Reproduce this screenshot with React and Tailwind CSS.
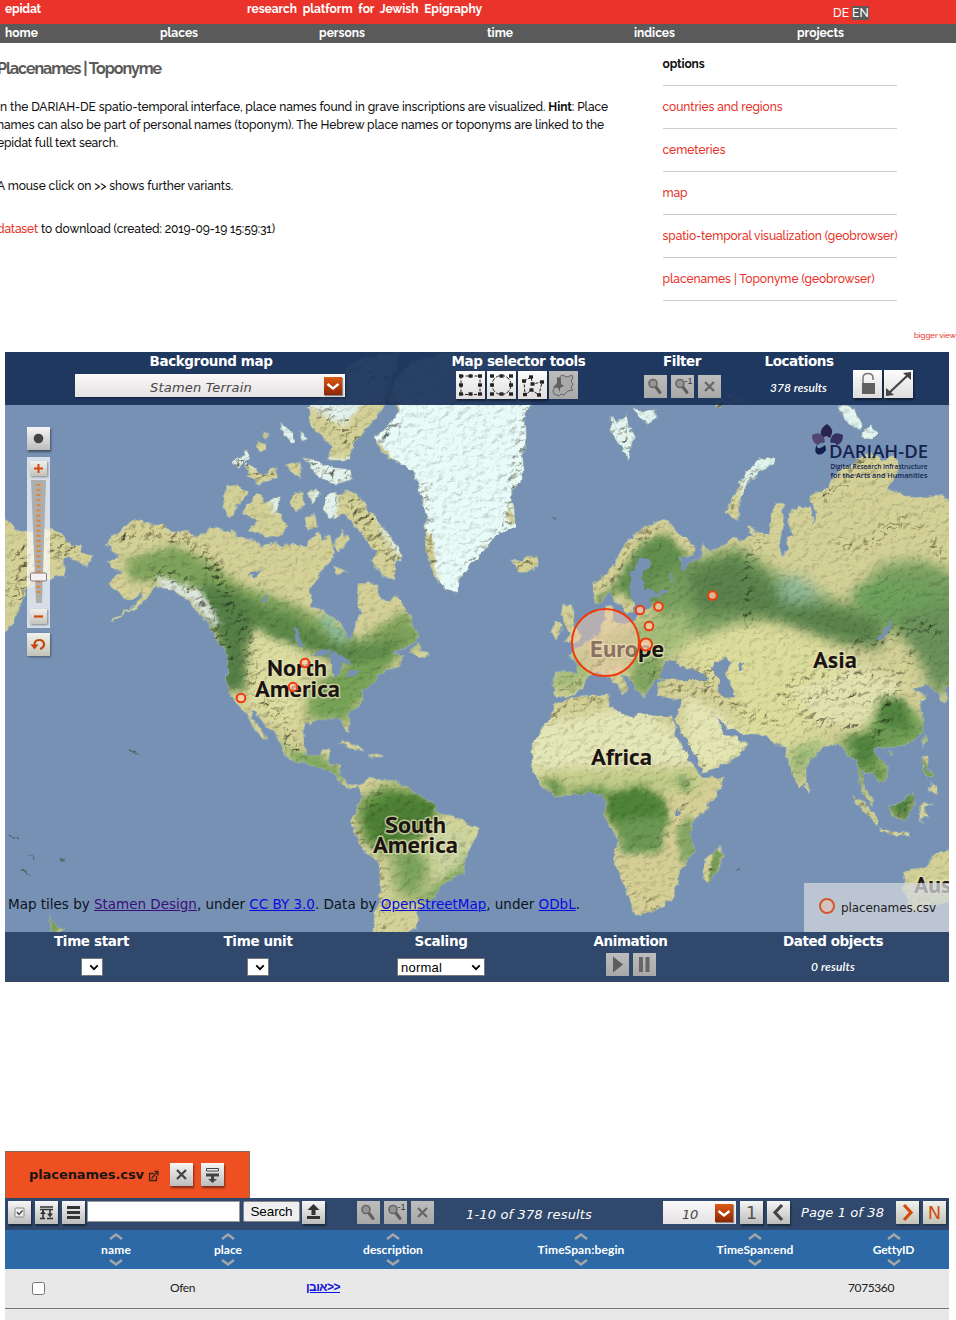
import React, { useLayoutEffect, useRef, useState } from "react";

/* Text that spreads its letters so that the run takes exactly `w` pixels. */
function Fit({ w, className = "", children, ...rest }) {
  const ref = useRef(null);
  const [ls, setLs] = useState(0);
  useLayoutEffect(() => {
    const el = ref.current;
    setLs((w - el.getBoundingClientRect().width) / el.textContent.length);
  }, [w]);
  return (
    <span ref={ref} className={"inline-block whitespace-nowrap " + className} style={{ letterSpacing: ls + "px" }} {...rest}>
      {children}
    </span>
  );
}

const verdana = "font-['Verdana','DejaVu_Sans',sans-serif] font-normal";
const calibri = "font-['Lato',sans-serif]";
const light = "bg-linear-to-b from-[#f6f6f6] to-[#bdbdbd] shadow-[1px_2px_2px_rgba(0,0,0,0.45)]";
const pale = "bg-linear-to-b from-[#fdfdfd] to-[#dedcdc] shadow-[1px_2px_2px_rgba(0,0,0,0.45)]";
const warm = "bg-linear-to-b from-[#f1f1ec] to-[#c3c3b9] shadow-[1px_1px_2px_rgba(0,0,0,0.4)]";
const off = "bg-linear-to-b from-[#bdbdbd] to-[#a8a8a8]";

function Btn({ tone = light, size = "size-[23px]", children, className = "" }) {
  return <button className={`flex shrink-0 items-center justify-center ${size} ${tone} ${className}`}>{children}</button>;
}

const Magnifier = ({ inverse }) => (
  <svg viewBox="0 0 23 23" className="size-[23px]">
    <path d="M11.500 11.500 16 17.500" stroke="#5f5f5f" strokeWidth="3" strokeLinecap="round" />
    <circle cx="9" cy="8.500" r="4" fill="#959595" stroke="#666" strokeWidth="1.600" />
    {inverse && <text x="13.500" y="9" fontSize="9" fill="#333" fontFamily="Liberation Sans, sans-serif">-1</text>}
  </svg>
);
const Cross = ({ c = "#666" }) => (
  <svg viewBox="0 0 23 23" className="size-[23px]"><path d="M7 7l9 9M16 7l-9 9" stroke={c} strokeWidth="2.300" /></svg>
);
const Chevron = () => (
  <span className="flex size-[18px] shrink-0 items-center justify-center bg-linear-to-b from-[#de5a12] to-[#8c2505] shadow-[1px_1px_1px_rgba(0,0,0,0.4)]">
    <svg viewBox="0 0 18 18" className="size-[18px]"><path d="M3.500 7 9 11.500l5.500-4.500" fill="none" stroke="#fff" strokeWidth="2.300" /></svg>
  </span>
);
const Arrow = () => <svg viewBox="0 0 12 8" className="h-[7px] w-[10px]"><path d="M1.500 1.500 6 6l4.500-4.500" fill="none" stroke="#000" strokeWidth="2.200" /></svg>;

function Handles({ pts }) {
  return pts.map(([x, y], i) => <rect key={i} x={x - 2} y={y - 1.7} width="4" height="3.400" fill="#222" />);
}

/* ---------- terrain ---------- */
const LAND = [
  // North and Central America
  "M107 562L119 557 107 545 112 536 120 532 133 518 147 523 160 525 175 533 187 530 195 537 205 532 217 525 224 532 233 531 240 538 253 539 262 547 275 543 283 546 296 544 305 548 312 540 317 530 322 540 330 535 334 548 332 560 322 570 314 582 309 590 311 606 323 612 336 620 343 626 347 638 353 638 356 622 362 613 357 600 358 584 366 582 377 585 380 597 387 602 398 596 403 607 410 615 414 628 420 637 412 645 400 649 391 655 404 655 400 665 393 668 384 672 377 677 371 684 362 690 362 703 348 713 350 732 346 731 340 718 320 720 305 723 302 740 307 755 320 757 322 750 330 748 328 762 340 765 341 778 348 784 358 786 354 790 343 785 333 773 320 768 305 763 295 761 283 753 280 743 273 731 263 722 254 710 249 711 257 724 267 739 264 740 255 730 247 713 238 705 227 690 227 670 229 655 221 646 213 634 209 623 200 615 190 602 173 590 157 585 150 592 143 604 128 612 112 622 114 619 131 608 141 598 144 590 132 600 123 598 118 590 110 585 112 578 123 572 113 568z",
  // Eastern Siberia at the left edge
  "M-5 512L5 518 15 530 23 532 33 533 50 528 63 535 70 545 80 546 82 553 93 556 88 566 80 563 72 558 63 558 65 575 47 578 27 590 20 605 12 625 5 632 -5 640z",
  // Arctic archipelago
  "M227 487L235 485 248 492 240 503 230 517 223 508z", "M247 505L257 495 267 502 275 500 277 512 288 527 280 535 270 537 248 530 257 522 243 512z",
  "M337 495L350 490 360 498 366 508 377 518 384 530 400 548 402 562 394 558 396 579 386 578 370 562 377 552 370 545 362 533 353 525 344 514 333 518z",
  "M307 408L320 398 340 375 358 360 400 352 384 405 380 412 367 428 353 445 350 460 327 460 333 447 322 436 313 428z",
  "M305 457L318 462 330 467 350 470 352 480 335 484 318 478z", "M280 424L288 428 295 440 290 443 284 435zM300 432L308 440 303 443zM262 433l6 2-3 3zM258 443l8 1 0 5-8 2z",
  "M232 464L247 451 249 457 238 468zM246 463L257 470 263 475 276 467 278 477 260 484 248 476z", "M285 466L300 462 301 478 292 472z",
  "M292 495L302 491 303 504 297 512 291 505z", "M274 497L279 497 278 511 273 505z", "M308 493L315 489 321 494 312 503z", "M328 495L336 492 334 512 329 518 324 508z", "M305 518L314 513 317 525 308 530z", "M334 546L342 530 348 541 340 552z", "M334 566L346 571 337 574z",
  // Greenland
  "M373 438L390 425 400 410 388 400 396 380 412 362 450 352 545 352 538 380 530 405 524 422 526 440 522 455 524 470 520 482 510 495 514 508 515 525 503 533 490 542 480 555 470 566 460 578 457 592 448 590 440 585 433 570 428 555 425 532 428 517 423 502 420 488 413 472 400 462 385 455z",
  "M513 560L522 562 530 556 537 557 539 566 530 570 525 573 518 570z",
  // Svalbard, Novaya Zemlya, Severnaya Zemlya
  "M610 418L618 422 627 415 628 428 634 436 627 458 621 445 613 435zM633 408L645 412 655 410 654 418 647 423 639 416z",
  "M773 457L762 459 750 468 740 482 735 495 727 512 732 518 739 520 738 506 742 494 750 480 763 469 773 464z",
  "M838 408L851 405 862 424 860 430 850 424zM862 437l8-12 8 9-8 5z",
  // British Isles
  "M563 605L570 606 573 614 572 622 580 635 579 640 565 642 570 634 565 625 561 614z", "M551 632L555 622 561 623 561 632 556 638z",
  // Eurasia
  "M595 602L593 584 605 574 613 568 622 549 632 537 647 525 663 520 672 524 677 533 687 538 695 548 693 555 677 557 683 568 692 562 700 561 703 545 708 551 720 547 733 538 744 540 753 535 748 527 758 533 770 536 773 508 778 502 784 503 783 522 779 547 783 555 789 549 787 538 793 535 789 520 791 509 797 510 798 506 810 508 813 525 817 512 810 502 810 495 827 488 837 472 857 462 870 452 882 461 893 457 900 468 890 482 887 490 900 493 905 497 927 498 933 495 945 496 949 503 960 503 960 683 949 683 945 690 948 700 943 704 936 690 926 685 913 690 926 695 919 707 924 720 923 733 909 743 893 747 876 748 873 753 889 767 888 777 878 783 873 773 863 770 864 787 873 800 872 806 861 790 859 773 856 760 846 753 838 743 823 747 806 765 806 783 799 787 788 763 786 747 776 745 766 735 743 733 729 728 716 717 724 735 736 737 748 745 739 757 720 766 703 773 695 755 683 737 676 723 681 700 670 698 658 695 658 683 668 678 655 680 650 688 643 698 636 687 626 677 620 674 629 688 623 694 616 683 606 676 599 671 586 677 584 686 576 693 566 697 556 695 553 688 555 673 566 671 577 673 577 663 569 655 578 648 590 641 600 632 605 620 607 606 612 607 612 618 620 624 633 622 640 613 627 613 622 605 614 600 609 592 602 603z",
  // Africa and Madagascar
  "M556 703L573 698 590 696 609 695 609 707 621 713 633 718 639 712 656 717 673 717 676 737 689 760 703 778 724 778 716 797 705 810 693 820 691 835 694 853 679 870 678 883 672 897 663 907 650 912 636 915 631 903 622 880 613 860 618 840 606 817 604 797 589 792 572 795 556 797 543 787 533 773 531 750 540 732 549 720z",
  "M721 847L723 857 716 872 709 883 703 878 706 860z",
  // South America
  "M358 787L370 777 377 779 387 780 407 787 417 795 433 803 437 813 457 817 478 830 475 842 467 853 463 873 450 879 440 887 435 897 427 903 417 915 417 927 403 935 372 935 377 910 380 893 380 863 363 850 356 836 350 823 357 810 362 797z",
  // Islands of the Indian Ocean, Pacific and Australia
  "M851 795L866 803 872 812 879 820 879 827 866 813zM889 807L902 802 913 792 914 803 906 820 891 815zM880 829L895 832 910 834 910 836 893 835 880 831zM920 805L932 803 925 808 929 818 924 815 922 823 919 814zM923 757l4 1 0 10 6 6-2 3-9-10zM931 783l6 3 0 8-7-3zM924 736l2 2-3 8-1-4zM806 781l4 5-1 6-4-4zM889 751l4 2-3 3z",
  "M960 848L949 850 936 853 926 867 912 869 904 874 903 887 908 897 910 912 920 910 935 904 949 903 960 903zM50 917l6 9 8 2-6 6-8-3z",
  "M338 745L348 742 360 748 366 752 360 751 348 745zM368 756l8-2 8 2-7 2zM410 653l8-10 4 7 7 5-4 2-8-2z",
  "M715 400l15 3-12 4zM728 395l14 6-10 3z",
];

const LAKES = [
  "M659 678L664 663 671 660 676 660 681 667 693 668 709 679 698 682 689 679 676 680z",
  "M711 668L714 662 728 658 731 665 725 670 729 680 734 697 725 698 718 692 720 682z",
  "M629 590L631 572 640 558 650 560 650 566 643 574 644 588 656 592 668 590 669 593 650 597 652 605 640 615 632 616 634 603z",
  "M329 655L335 652 345 657 352 662 350 666 342 662 340 672 335 678 332 668z", "M350 671L361 671 355 676 345 677zM313 655l10-6 9 3-8 4z",
  "M674 812l3-4 4 3-2 6-4-1z", "M741 661l3 2-1 8-4 1zM877 638l14-17 2 0-9 16-6 4z", "M680 562l7 5-2 4-5-3zM670 575l3 0 1 8-3-2zM293 628l4 0 5 18-3 1zM251 575l12-6-8 9z",
  "M676 723l4 5 18 35 6 9-3 1-13-16z", "M247 575l9-4-2 6zM262 600l6-5-2 6z",
];

/* Each patch: fill, outline, softness */
const drylands = [
  ["#dbdca0", "M250 625L300 645 305 700 290 730 250 705 240 670z", 5],
  ["#e4e7b8", "M535 725L640 705 690 745 700 765 600 768 525 770z", 6],
  ["#e4e6b5", "M685 695L725 715 755 745 705 775 685 740z", 5],
  ["#dcdd9d", "M660 640L760 620 830 640 850 690 800 740 740 740 735 690 700 670z", 8],
  ["#e2e2b0", "M790 690L860 665 905 685 870 725 820 725z", 6],
  ["#d5cf96", "M560 800L700 790 730 770 700 810 680 800 690 870 665 915 635 922 615 860 690 850 660 850z", 5],
  ["#d0d69c", "M425 820L485 825 465 870 430 880 415 845z", 6],
  ["#d3d399", "M385 860L397 870 400 935 372 935z", 3],
  ["#dadb9e", "M770 735L830 735 805 765z", 5],
];
const greens = [
  ["#7fa35c", "M125 560L175 545 215 565 240 585 280 598 330 622 360 640 405 610 425 640 380 670 330 655 290 640 245 620 232 650 235 690 225 690 220 640 200 605 165 582 130 580z", 5],
  ["#557e47", "M200 582L235 592 262 610 248 645 245 690 222 690 224 645 208 620z", 5],
  ["#5c8849", "M230 598L290 616 330 640 370 648 405 635 375 675 320 654 270 636z", 5],
  ["#76a257", "M310 690L345 665 390 655 380 680 355 708 348 722 308 720z", 6],
  ["#7fa85f", "M262 722L290 750 320 755 342 770 350 785 330 775 295 762z", 4],
  ["#588a3c", "M358 800L390 785 430 797 440 815 410 840 385 855 362 840z", 6],
  ["#4d7f35", "M362 815L400 795 434 803 430 832 388 852z", 3],
  ["#78a25a", "M392 850L415 835 430 870 418 900 398 895 394 870z", 8],
  ["#8cae69", "M415 900L440 880 468 850 470 875 430 905z", 4],
  ["#628f4e", "M595 600L610 590 640 545 665 532 695 565 675 600 655 605 630 600 620 590 600 605z", 4],
  ["#789f5f", "M650 585L690 560 740 548 800 590 850 605 880 565 920 560 960 575 960 675 890 628 850 642 800 622 750 618 700 635 660 628z", 7],
  ["#5b824c", "M685 572L735 555 770 582 830 608 885 622 880 650 820 635 770 615 700 612z", 7],
  ["#6ea15c", "M850 590L890 580 949 590 949 620 880 622z", 6],
  ["#a5bd7a", "M575 650L600 640 640 620 690 610 690 640 655 670 600 660 580 690 550 690 550 675z", 7],
  ["#82a562", "M635 660L660 655 665 675 645 698 628 685z", 5],
  ["#bccb86", "M540 775L700 770 700 790 560 790z", 7],
  ["#4f8438", "M606 793L640 785 665 798 668 825 655 835 622 835 604 812z", 4],
  ["#6b9854", "M618 820L665 815 662 852 622 854z", 4],
  ["#6c9850", "M541 778L558 780 568 793 555 800zM570 790l35-5 5 14-38 1z", 4],
  ["#86a766", "M676 778L688 776 690 792 680 790zM675 830L692 815 697 853 682 865z", 3],
  ["#6f9d54", "M835 740L865 735 880 705 890 698 920 715 930 735 900 752 880 755 895 775 878 788 865 772 862 790 878 808 858 792 853 762z", 6],
  ["#528440", "M850 735L880 735 870 765 858 765zM885 807L916 788 908 824zM850 793L882 830 866 813zM880 700L905 700 910 730 880 725z", 4],
  ["#93b573", "M790 750L825 740 820 752 805 765 803 785 795 775z", 6],
  ["#6b915a", "M895 615L960 600 960 675 935 700 922 665z", 7],
  ["#78a05a", "M715 847l8 5-10 30-5 0zM920 755l14 20-2 4-8-8zM50 915l14 12-14 6z", 1],
  ["#c8d3a0", "M430 830L470 835 460 868 437 875z", 6],
];
const frost = [
  ["#8cbc9f", "M325 612L350 640 340 645 318 620z", 5],
  ["#91ba99", "M775 580L800 575 825 600 785 605z", 8],
  ["#e3f2ee", "M307 405L340 352 400 352 382 400 360 405 345 425 332 420zM303 458h56v28h-56zM270 420h40v28h-40zM230 450h25v18h-25zM272 492h10v20h-10zM323 485h14v40h-14zM310 490h10v12h-10z", 3],
  ["#e1f4f0", "M375 510L408 545 402 562 385 535zM605 400h60v65h-60zM740 455h40v45h-40zM835 400h50v45h-50z", 4],
  ["#dde6dd", "M158 575L200 590 222 625 212 625 190 600 160 588z", 3],
];
const ranges = [
  ["M120 540q30-15 60 0t40 35M150 575q40-5 65 45l15 45M225 600q25 30 25 60t30 60q15 35 20 35M195 545q35 40 35 60", 12],
  ["M10 560q40-20 70-10M12 600l20-40", 18],
  ["M320 410q40 20 35 50M340 360l50 20M350 500l50 65M235 460l40 20M300 462l50 15", 16],
  ["M380 440l20-20M423 480l6 90M520 380l5 40-8 45-10 60-45 50", 9],
  ["M600 590l15-20 40-45M515 562h20M615 420l15 30M735 510l20-40", 9],
  ["M358 800q-10 30 12 52 16 10 13 80M388 785l-20 25", 6],
  ["M765 540l-14 12q-4 20-3 75M552 720q20-20 50-22M560 690q10-5 20-12M590 665q15-5 20 0M650 660l10 25M665 690q40-5 55 5 25 20 60 30", 7],
  ["M715 675l-25-12 35 35M780 700q20-30 60-25 30 5 50-5M785 690q15 38 75 36M800 700q40-15 80 5", 9],
  ["M835 540q30 20 50-10t60 30M820 500l50-40M880 640q30-20 60-10M850 650l50-20M900 680l-25 60M915 650l-30 50", 9],
  ["M690 745q10 20 20 30M690 780l-8 40-25 25M706 860l10 15M620 870q15 35 40 35", 4],
  ["M856 797l22 26M885 832l25 4M895 815l15-15M925 757l10 35", 4],
  ["M625 365h40M715 400h30", 20],
];

function Terrain() {
  return (
    <svg viewBox="5 352 944 580" className="absolute inset-0 h-[580px] w-[944px]" preserveAspectRatio="none">
      <defs>
        <filter id="coast" x="0" y="0" width="100%" height="100%" filterUnits="objectBoundingBox" colorInterpolationFilters="sRGB">
          <feTurbulence type="fractalNoise" baseFrequency="0.13" numOctaves="2" seed="4" result="n" />
          <feDisplacementMap in="SourceGraphic" in2="n" scale="7" xChannelSelector="R" yChannelSelector="G" />
        </filter>
        <filter id="relief" x="0" y="0" width="100%" height="100%" colorInterpolationFilters="sRGB">
          <feTurbulence type="fractalNoise" baseFrequency="0.15 0.19" numOctaves="3" seed="11" />
          <feColorMatrix values="0 0 0 0 0 0 0 0 0 0 0 0 0 0 0 1 0 0 0 0" />
          <feDiffuseLighting surfaceScale="2.400" diffuseConstant="1.360" lightingColor="#fffdf4">
            <feDistantLight azimuth="225" elevation="50" />
          </feDiffuseLighting>
        </filter>
        <filter id="soft" x="-5%" y="-5%" width="110%" height="110%"><feGaussianBlur stdDeviation="3" /></filter>
        {[1, 3, 4, 5, 6, 7, 8].map((b) => (
          <filter key={b} id={"b" + b} x="-30%" y="-30%" width="160%" height="160%" colorInterpolationFilters="sRGB"><feGaussianBlur stdDeviation={b * 0.9} /></filter>
        ))}
        <clipPath id="land"><path d={LAND.join("")} /></clipPath>
        <mask id="mountains" maskUnits="userSpaceOnUse" x="-5" y="342" width="964" height="600">
          <rect x="-5" y="342" width="964" height="600" fill="#3a3a3a" />
          <g filter="url(#soft)" fill="none" stroke="#f4f4f4">
            {ranges.map(([d, w], i) => <path key={i} d={d} strokeWidth={w} />)}
          </g>
        </mask>
      </defs>
      <rect x="0" y="340" width="960" height="600" fill="#7691b3" />
      <g filter="url(#coast)">
        <rect x="-5" y="342" width="964" height="600" fill="#7691b3" />
        <path d={LAND.join("")} fill="none" stroke="#93a9b0" strokeWidth="1.500" />
        <g clipPath="url(#land)">
          <path d={LAND.join("")} fill="#d4d198" />
          {drylands.map(([c, d, b], i) => <path key={i} d={d} fill={c} filter={`url(#b${b})`} />)}
          {greens.map(([c, d, b], i) => <path key={i} d={d} fill={c} filter={`url(#b${b})`} />)}
          {frost.map(([c, d, b], i) => <path key={i} d={d} fill={c} filter={`url(#b${b})`} />)}
          <path d="M373 438L400 410 390 380 440 345 552 345 530 422 526 482 512 500 516 525 475 562 457 594 440 586 428 540 423 500 405 470z" fill="#e8fbf9" />
          <path d="M424 535l8 0 4 45-8-20zM508 500l8 22-8 2z" fill="#d1cb95" filter="url(#b1)" />
          <g mask="url(#mountains)" className="mix-blend-multiply"><rect x="-5" y="342" width="964" height="600" filter="url(#relief)" /></g>
        </g>
        {LAKES.map((d, i) => <path key={i} d={d} fill="#7691b3" />)}
        <path d="M131 750l5 2 2 3-3-1zM10 835l8 5M29 855l5 7M22 869l8 6M60 861l5-2M736 870l4-1M554 518h2" fill="none" stroke="#4d6560" strokeWidth="1.100" />
      </g>
      <g fontFamily="'PT Sans','Open Sans',sans-serif" fontWeight="700" fontSize="24" fill="#1c1410" stroke="#e6e5bd" strokeOpacity="0.700" strokeWidth="3" paintOrder="stroke" strokeLinejoin="round">
        <text x="267" y="676" textLength="60" lengthAdjust="spacingAndGlyphs">North</text>
        <text x="255" y="697" textLength="85" lengthAdjust="spacingAndGlyphs">America</text>
        <text x="385" y="833" textLength="61" lengthAdjust="spacingAndGlyphs">South</text>
        <text x="373" y="853" textLength="85" lengthAdjust="spacingAndGlyphs">America</text>
        <text x="591" y="765" textLength="61" lengthAdjust="spacingAndGlyphs">Africa</text>
        <text x="813" y="668" textLength="44" lengthAdjust="spacingAndGlyphs">Asia</text>
        <text x="590" y="657" textLength="74" lengthAdjust="spacingAndGlyphs">Europe</text>
        <text x="914" y="893" textLength="37" lengthAdjust="spacingAndGlyphs">Aus</text>
      </g>
      <g fill="#ffcfb0" fillOpacity="0.500" stroke="#f03a0c">
        <circle cx="605.500" cy="642.500" r="33.500" strokeWidth="2" fill="#f5ceb0" />
        {[[640, 610], [658.5, 606.5], [649, 626], [712.5, 595.5], [305, 663], [293, 687], [241, 698]].map(([x, y]) => (
          <circle key={x} cx={x} cy={y} r="4.300" strokeWidth="2" fillOpacity="0.750" />
        ))}
        <circle cx="646" cy="644.500" r="6" strokeWidth="2" fillOpacity="0.750" />
      </g>
      {/* DARIAH-DE logo */}
      <g>
        <path d="M827 424q6 4 5 9-1 3-2 5-3-2-4-2-3 1-3 3-3-3-2-8 1-4 6-7z" fill="#27234e" />
        <path d="M812 435q8-4 11 1 3 5 1 7-4-1-6 2-6-2-6-10z" fill="#514572" />
        <path d="M843 435q-8-4-11 1-3 5-1 7 4-1 6 2 6-2 6-10z" fill="#35305f" />
        <path d="M818 443q-5 8-1 11 5 2 9-4 0-3-1-5-4 4-7 3-2-1 0-5z" fill="#131f4d" />
        <text x="829" y="458" fontSize="18.500" fontWeight="600" fill="#142250" fontFamily="'Open Sans',sans-serif" textLength="99" lengthAdjust="spacingAndGlyphs">DARIAH-DE</text>
        <g fontSize="7" fontWeight="600" fill="#142250" fontFamily="'Open Sans',sans-serif">
          <text x="830.500" y="469" textLength="97" lengthAdjust="spacingAndGlyphs">Digital Research Infrastructure</text>
          <text x="830.500" y="477.500" textLength="97" lengthAdjust="spacingAndGlyphs">for the Arts and Humanities</text>
        </g>
      </g>
    </svg>
  );
}

const Title = ({ w, children }) => <div className="h-[18px] text-center text-[13.500px] font-bold leading-[18px] text-white"><Fit w={w}>{children}</Fit></div>;

function MapPanel() {
  const tool = "h-[28px] w-[29px]";
  return (
    <section className={`relative ml-[5px] h-[580px] w-[944px] shrink-0 overflow-hidden ${verdana}`}>
      <Terrain />
      <div className="relative flex h-full flex-col">
        <header className="flex h-[53px] shrink-0 bg-[#193159]/93">
          <div className="w-[412px]">
            <Title w={123}>Background map</Title>
            <div className="ml-[70px] mt-[4px] flex h-[23px] w-[270px] items-center bg-linear-to-b from-[#faf8f9] to-[#e4e2e2] pr-[3px] shadow-[1px_1px_2px_rgba(0,0,0,0.4)]">
              <span className="flex-1 pl-[3px] pt-[3px] text-center text-[13px] italic leading-none text-[#4a4747]"><Fit w={102}>Stamen Terrain</Fit></span>
              <Chevron />
            </div>
          </div>
          <div className="w-[202px] pl-px">
            <Title w={134}>Map selector tools</Title>
            <div className="ml-[38px] mt-[1px] flex gap-[2px]">
              <Btn tone={pale} size={tool}><svg viewBox="0 0 29 28" className={tool}><rect x="5" y="5" width="19" height="18.500" fill="none" stroke="#222" strokeDasharray="3 1.500" /><Handles pts={[[5, 5], [14.5, 5], [24, 5], [5, 14], [24, 14], [5, 23], [14.5, 23], [24, 23]]} /></svg></Btn>
              <Btn tone={pale} size={tool}><svg viewBox="0 0 29 28" className={tool}><circle cx="14.500" cy="14" r="9.500" fill="none" stroke="#222" strokeDasharray="4 1.500" /><Handles pts={[[5, 5], [14.5, 5], [24, 5], [5, 14], [24, 14], [5, 23], [14.5, 23], [24, 23]]} /></svg></Btn>
              <Btn tone={pale} size={tool}><svg viewBox="0 0 29 28" className={tool}><path d="M6 10 13 6 14.500 13 24 11 21 24 13.500 19 7 24z" fill="none" stroke="#222" strokeDasharray="3 1.500" /><Handles pts={[[6, 10], [13, 6], [14.5, 13], [24, 11], [21, 24], [13.5, 19], [7, 23.5]]} /></svg></Btn>
              <Btn tone={off} size={tool}><svg viewBox="0 0 29 28" className={tool}><path d="M11 9q-1-4 2-5l5 2 5-2 1 3-2 3 2 3-2 4 2 2-5 1-4 4-3-1-2 2-5-2-1-3 2-5z" fill="#a9a9a9" stroke="#666" /><path d="M8 6l4 1 0 6 3 2-4 2 0 4-2-4-5-1 4-3z" fill="#606060" /></svg></Btn>
            </div>
          </div>
          <div className="w-[126px]">
            <Title w={38}>Filter</Title>
            <div className="ml-[25px] mt-[5px] flex gap-[4px]">
              <Btn tone={off}><Magnifier /></Btn><Btn tone={off}><Magnifier inverse /></Btn><Btn tone={off}><Cross /></Btn>
            </div>
          </div>
          <div className="w-[108px]">
            <Title w={69}>Locations</Title>
            <div className={`mt-[9px] pr-px text-center text-[12px] font-semibold italic leading-[18px] text-white ${calibri}`}><Fit w={57}>378 results</Fit></div>
          </div>
          <div className="mt-[18px] flex gap-[2px]">
            <Btn tone={pale} size={tool}><svg viewBox="0 0 29 28" className={tool}><path d="M10 13V8q0-4.500 5-4.500T20 8v2" fill="none" stroke="#777" strokeWidth="1.500" /><rect x="9" y="13" width="13" height="11" fill="#606060" /></svg></Btn>
            <Btn tone={pale} size={tool}><svg viewBox="0 0 29 28" className={tool}><path d="M5 23 24 5" stroke="#444" strokeWidth="2.200" /><path d="M27 2v8l-8-7zM2 26v-8l8 7z" fill="#444" /></svg></Btn>
          </div>
        </header>

        <div className="ml-[22px] mt-[22px] flex w-[23px] flex-col">
          <Btn><svg viewBox="0 0 23 23" className="size-[23px]"><circle cx="11.500" cy="11.500" r="4.800" fill="#444" /></svg></Btn>
          <div className="mt-[7px] flex h-[171px] flex-col items-center bg-white/70 pt-[4px]">
            <Btn tone={warm} size="h-[15px] w-[17px]"><svg viewBox="0 0 17 15" className="h-[15px] w-[17px]"><path d="M8.500 3v9M4 7.500h9" stroke="#d1480e" strokeWidth="2" /></svg></Btn>
            <svg viewBox="0 0 19 133" className="h-[133px] w-[19px]">
              <path d="M2 4h15l-4 123H7z" fill="#aeaeae" />
              {Array.from({ length: 22 }, (_, i) => <rect key={i} x="7.500" y={8 + i * 5.1} width="4" height="1.800" fill="#e78226" />)}
              <rect x="1.500" y="97" width="16" height="8" rx="1" fill="#f4f0f2" stroke="#80787c" />
            </svg>
            <Btn tone={warm} size="h-[15px] w-[17px]"><svg viewBox="0 0 17 15" className="h-[15px] w-[17px]"><path d="M4 7.500h9" stroke="#d1480e" strokeWidth="2.200" /></svg></Btn>
          </div>
          <Btn tone={warm} className="mt-[5px]"><svg viewBox="0 0 23 23" className="size-[23px]"><path d="M7.500 12q0-5 4.500-5 5 0 5 4.500 0 3-4 4.500" fill="none" stroke="#c6460d" strokeWidth="2.200" /><path d="M3.500 11.500h8l-4 5z" fill="#c6460d" /></svg></Btn>
        </div>

        <div className="mt-auto flex items-end justify-between">
          <p className="mb-[18px] ml-[3px] text-[13.500px] leading-5 text-[#0c1420]">
            <Fit w={572}>Map tiles by <a className="text-[#3a0f7c] underline">Stamen Design</a>, under <a className="text-[#0a0ae0] underline">CC BY 3.0</a>. Data by <a className="text-[#0a0ae0] underline">OpenStreetMap</a>, under <a className="text-[#0a0ae0] underline">ODbL</a>.</Fit>
          </p>
          <div className="flex h-[49px] w-[145px] items-center bg-[#d4d8dd]/75 pl-[15px]">
            <span className="-mt-[3px] size-[16px] rounded-full border-2 border-[#d4572f] bg-[#d5c4bd]" />
            <span className="ml-[6px] text-[12px] text-[#1e2126]"><Fit w={95}>placenames.csv</Fit></span>
          </div>
        </div>
      </div>
    </section>
  );
}

function TimeBar() {
  const small = "mt-[8px] flex h-[18px] w-[22px] items-center justify-center border border-[#777] bg-white pl-1";
  return (
    <section className={`ml-[5px] flex h-[50px] w-[944px] shrink-0 bg-[#30486c] ${verdana}`}>
      <div className="flex w-[173px] flex-col items-center"><Title w={75}>Time start</Title><span className={small}><Arrow /></span></div>
      <div className="flex w-[160px] flex-col items-center"><Title w={69}>Time unit</Title><span className={small}><Arrow /></span></div>
      <div className="ml-px flex w-[204px] flex-col items-center"><Title w={53}>Scaling</Title>
        <span className="mt-[8px] flex h-[18px] w-[88px] items-center justify-between border border-[#777] bg-white px-[3px] font-['Liberation_Sans',sans-serif] text-[13px] leading-none text-black"><Fit w={41}>normal</Fit><Arrow /></span></div>
      <div className="flex w-[175px] flex-col items-center"><Title w={74}>Animation</Title>
        <div className="mt-[3px] flex gap-[4px] pl-px">
          <Btn tone={off}><svg viewBox="0 0 23 23" className="size-[23px]"><path d="M7 3.500 17 11.500 7 19.500z" fill="#5d5d5d" /></svg></Btn>
          <Btn tone={off}><svg viewBox="0 0 23 23" className="size-[23px]"><path d="M6 4h4v15H6zM12.500 4h4v15h-4z" fill="#666" /></svg></Btn>
        </div></div>
      <div className="flex w-[230px] flex-col items-center"><Title w={100}>Dated objects</Title><div className={`mt-[8px] text-[12px] font-semibold italic leading-[18px] text-white ${calibri}`}><Fit w={44}>0 results</Fit></div></div>
    </section>
  );
}

const Sort = ({ up }) => <svg viewBox="0 0 14 7" className="h-[7px] w-[14px]"><path d={up ? "M1 6 7 1.500 13 6" : "M1 1l6 4.500L13 1"} fill="none" stroke="#a6a6a6" strokeWidth="2.400" /></svg>;

function Table() {
  const cols = "grid grid-cols-[67px_88px_136px_194px_182px_166px_111px]";
  const heads = [["name", 30], ["place", 28], ["description", 60], ["TimeSpan:begin", 87], ["TimeSpan:end", 77], ["GettyID", 41]];
  return (
    <section className={`ml-[5px] mt-[169px] flex w-[944px] flex-1 flex-col ${verdana}`}>
      <div className="flex h-[47px] w-[245px] shrink-0 items-center border border-b-0 border-[#8a6a5c] bg-[#ee5022] pl-[23px]">
        <span className="text-[13px] font-bold text-[#1c1512]"><Fit w={115}>placenames.csv</Fit></span>
        <svg viewBox="0 0 12 12" className="ml-[4px] mt-[1px] size-[12px]"><path d="M6 3.500H1.500v7h7V6M3.500 8.500 9 2.500M6.500 1.500H10v4" fill="none" stroke="#3b2018" strokeWidth="1.300" /></svg>
        <Btn className="-mt-[2px] ml-[10px]"><Cross c="#444" /></Btn>
        <Btn className="-mt-[2px] ml-[8px]"><svg viewBox="0 0 23 23" className="size-[23px]"><path d="M5.500 5.500h12v2.500h-12z" fill="#eee" stroke="#444" /><path d="M5 10.500h13v3h-5V16h3l-4.500 4L7 16h3v-2.500H5z" fill="#444" /></svg></Btn>
      </div>
      <div className="flex h-[32px] shrink-0 items-start bg-[#30486c] pl-[3px] pt-[3px]">
        <Btn><svg viewBox="0 0 23 23" className="size-[23px]"><rect x="7" y="7" width="9" height="9" rx="1" fill="#eee" stroke="#888" /><path d="M9 11l2 2.500 3.500-4" fill="none" stroke="#444" strokeWidth="1.300" /></svg></Btn>
        <Btn className="ml-[4px]"><svg viewBox="0 0 23 23" className="size-[23px]"><path d="M5 6h13M5 8.500h13M8 9v8M15 9v6M5 17.500h5M12 17.500h6" stroke="#333" strokeWidth="1.600" fill="none" /><path d="M5 13l3-3.500 3 3.500zM12 12.500l3 4 3-4z" fill="#333" /></svg></Btn>
        <Btn className="ml-[4px]"><svg viewBox="0 0 23 23" className="size-[23px]"><path d="M5 6.500h13M5 11.500h13M5 16.500h13" stroke="#333" strokeWidth="3" /></svg></Btn>
        <span className="ml-[2px] h-[21px] w-[153px] border border-[#999] bg-white" />
        <span className="ml-[3px] flex h-[21px] w-[57px] items-center justify-center rounded-[2px] border border-[#888] bg-[#efefef] font-['Liberation_Sans',sans-serif] text-[13.500px] leading-none text-black"><Fit w={42}>Search</Fit></span>
        <Btn className="ml-[2px]"><svg viewBox="0 0 23 23" className="size-[23px]"><path d="M11.500 3l6 6h-4v5h-4V9h-4zM5 15h13v3H5z" fill="#333" /></svg></Btn>
        <Btn tone={off} className="ml-[32px]"><Magnifier /></Btn>
        <Btn tone={off} className="ml-[4px]"><Magnifier inverse /></Btn>
        <Btn tone={off} className="ml-[4px]"><Cross /></Btn>
        <span className="ml-[32px] mt-[4px] w-[126px] text-[13px] italic leading-[20px] text-white"><Fit w={126}>1-10 of 378 results</Fit></span>
        <span className="ml-[71px] flex h-[23px] w-[73px] items-center bg-linear-to-b from-[#faf8f9] to-[#e4e2e2] pr-[3px]">
          <span className="flex-1 pl-[2px] pt-[4px] text-center text-[13px] italic leading-none text-[#444]"><Fit w={16}>10</Fit></span><Chevron />
        </span>
        <Btn className="ml-[4px] text-[18px] leading-none text-[#555]">1</Btn>
        <Btn className="ml-[4px]"><svg viewBox="0 0 23 23" className="size-[23px]"><path d="M15 4 8 11.500 15 19" fill="none" stroke="#444" strokeWidth="3.200" /></svg></Btn>
        <span className="ml-[11px] mt-[2px] w-[83px] text-[13px] italic leading-[20px] text-white"><Fit w={83}>Page 1 of 38</Fit></span>
        <Btn tone={warm} className="ml-[12px]"><svg viewBox="0 0 23 23" className="size-[23px]"><path d="M8 4 15 11.500 8 19" fill="none" stroke="#cf4c0c" strokeWidth="3.200" /></svg></Btn>
        <Btn tone={warm} className="ml-[4px] text-[18px] leading-none text-[#cf4c0c]">N</Btn>
      </div>
      <div className={`h-[39px] shrink-0 bg-[#2c69a6] text-white ${cols} ${calibri}`}>
        <span />
        {heads.map(([h, w]) => (
          <div key={h} className="flex flex-col items-center pt-[3px]"><Sort up /><span className="my-[1px] text-[12px] font-bold leading-[17px]"><Fit w={w}>{h}</Fit></span><Sort /></div>
        ))}
      </div>
      <div className={`h-[40px] shrink-0 border-b border-[#777] bg-[#e8e8e8] text-[12px] leading-[37px] text-[#222] ${cols} ${calibri}`}>
        <span className="ml-[27px] mt-[13px] size-[13px] rounded-[2.500px] border border-[#767676] bg-white" />
        <span />
        <span className="pl-[10px]"><Fit w={25}>Ofen</Fit></span>
        <a className="pl-[10px] font-['Liberation_Sans',sans-serif] text-[12px] text-[#1010e0]"><Fit w={34} className="font-bold underline">אובן&gt;&gt;</Fit></a>
        <span /><span />
        <span className="pl-[10px]"><Fit w={46}>7075360</Fit></span>
      </div>
      <div className="flex-1 bg-[#e8e8e8]" />
    </section>
  );
}

const options = [["countries and regions", 120], ["cemeteries", 63], ["map", 25], ["spatio-temporal visualization (geobrowser)", 235], ["placenames | Toponyme (geobrowser)", 212]];
const nav = [["home", 33], ["places", 38], ["persons", 46], ["time", 26], ["indices", 41], ["projects", 47]];

export default function App() {
  return (
    <div className="flex h-[1320px] w-[956px] flex-col overflow-hidden bg-white font-['Raleway','Lato',sans-serif] text-[12px] font-medium text-[#111]">
      <div className="flex h-[24px] shrink-0 bg-[#e9332b] pl-[5px] font-bold leading-[18px] text-white">
        <span className="w-[242px]"><Fit w={36}>epidat</Fit></span>
        <span className="w-[586px]"><Fit w={235} className="[word-spacing:3px]">research platform for Jewish Epigraphy</Fit></span>
        <span className="mt-[6px] flex h-[14px] items-center gap-[3px] font-medium leading-none"><Fit w={16}>DE</Fit><span className="flex h-[14px] items-center bg-[#5a5a5a]"><Fit w={17}>EN</Fit></span></span>
      </div>
      <nav className="grid h-[19px] shrink-0 grid-cols-[155px_159px_168px_147px_163px_1fr] bg-[#5a5a5a] pl-[5px] font-bold leading-[18px] text-white">
        {nav.map(([t, w]) => <a key={t}><Fit w={w}>{t}</Fit></a>)}
      </nav>
      <div className="flex h-[283px] shrink-0">
        <main className="-ml-[3px] w-[665.500px] leading-[18px]">
          <h1 className="mt-[16px] h-[20px] text-[16px] font-bold leading-[20px] text-[#5a5a5a]"><Fit w={164}>Placenames | Toponyme</Fit></h1>
          <p className="mt-[19px] h-[54px]">
            <Fit w={611}>In the DARIAH-DE spatio-temporal interface, place names found in grave inscriptions are visualized. <b>Hint</b>: Place</Fit>
            <Fit w={607}>names can also be part of personal names (toponym). The Hebrew place names or toponyms are linked to the</Fit>
            <Fit w={121}>epidat full text search.</Fit>
          </p>
          <p className="mt-[25px]"><Fit w={236}>A mouse click on &gt;&gt; shows further variants.</Fit></p>
          <p className="mt-[25px]"><span className="text-[#e8332a]"><Fit w={41}>dataset</Fit></span><Fit w={234} className="ml-[3px]">to download (created: 2019-09-19 15:59:31)</Fit></p>
        </main>
        <aside className="w-[234.500px] pt-[1px]">
          <div className="h-[42px] border-b border-[#ccc] pt-[11px] font-bold leading-[18px]"><Fit w={42}>options</Fit></div>
          {options.map(([t, w]) => <a key={t} className="block h-[43px] border-b border-[#ccc] pt-[12px] leading-[18px] text-[#e8332a]"><Fit w={w}>{t}</Fit></a>)}
        </aside>
      </div>
      <div className="flex h-[26px] shrink-0 justify-end pt-[4px] text-[8px] leading-[10px] text-[#e8332a]"><Fit w={42}>bigger view</Fit></div>
      <MapPanel />
      <TimeBar />
      <Table />
    </div>
  );
}
